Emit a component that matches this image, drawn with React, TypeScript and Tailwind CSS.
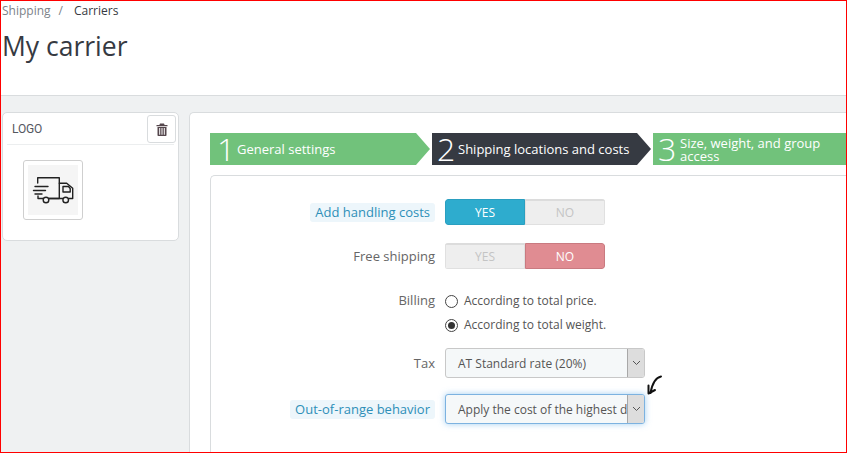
import React from "react";

function Truck() {
  return (
    <svg width="50" height="50" viewBox="0 0 50 50" fill="none" stroke="#222" strokeWidth="1.4" strokeLinecap="round" strokeLinejoin="round">
      <path d="M9.7 18V12.7H31.3V33.5H21" />
      <path d="M31.3 18.3H38.7L44.7 23.3V33.5H40.6" />
      <path d="M34.8 33.5H15" />
      <path d="M35 21.5H40.5L42.2 23.5V27H35Z" />
      <circle cx="18" cy="35" r="2.8" fill="#f5f5f5" />
      <circle cx="37.7" cy="35" r="2.8" fill="#f5f5f5" />
      <path d="M7 21.5H20M5.5 25.5H17.5M7 29H14M10 31V33.5H15" />
    </svg>
  );
}

function Trash() {
  return (
    <svg width="12" height="13" viewBox="0 0 12 13" fill="#54464c">
      <path d="M4 0.5H8L8.6 2H11.5V3.2H0.5V2H3.4Z" />
      <path fillRule="evenodd" d="M1.5 4H10.5V12.2A.8.8 0 0 1 9.7 13H2.3A.8.8 0 0 1 1.5 12.2ZM3.2 5V11.8H4.2V5ZM5.5 5V11.8H6.5V5ZM7.8 5V11.8H8.8V5Z" />
    </svg>
  );
}

function Chevron() {
  return (
    <svg width="9" height="6" viewBox="0 0 9 6" fill="none" stroke="#555" strokeWidth="1">
      <path d="M1 1L4.5 4.5L8 1" />
    </svg>
  );
}

function Label({ children, help }: { children: React.ReactNode; help?: boolean }) {
  return (
    <div className="w-[224px] shrink-0 flex justify-end items-center">
      <span
        className={
          help
            ? "bg-[#edf6fb] text-[#2d8fb8] rounded-[3px] px-[5px] h-[19px] flex items-center pt-[2px] text-[13px]"
            : "text-[#666] text-[13px] pt-[2px]"
        }
      >
        {children}
      </span>
    </div>
  );
}

function Toggle({ yes }: { yes: boolean }) {
  return (
    <div className="flex w-[160px] h-[26px] ml-[10px] text-[12px] rounded-[3px] overflow-hidden">
      <div
        className={
          yes
            ? "w-[80px] flex items-center justify-center pt-[1px] font-medium text-white bg-[#2eacce] border border-[#2a9fc0] rounded-l-[3px]"
            : "w-[80px] flex items-center justify-center pt-[1px] text-[#c4c4c4] bg-[#eeeeee] border border-[#e0e0e0] border-t-[2px] border-t-[#dcdcdc]"
        }
      >
        YES
      </div>
      <div
        className={
          yes
            ? "w-[80px] flex items-center justify-center pt-[1px] text-[#c4c4c4] bg-[#eeeeee] border border-[#e0e0e0] border-t-[2px] border-t-[#dcdcdc]"
            : "w-[80px] flex items-center justify-center pt-[1px] font-medium text-white bg-[#e08c92] border border-[#c97a80] rounded-r-[3px]"
        }
      >
        NO
      </div>
    </div>
  );
}

function Radio({ checked, children }: { checked?: boolean; children: React.ReactNode }) {
  return (
    <div className="h-[24px] flex items-center text-[12px] text-[#555]">
      <span className="w-[13px] h-[13px] rounded-full border border-[#444] bg-white flex items-center justify-center mr-[6px]">
        {checked && <span className="w-[7px] h-[7px] rounded-full bg-[#333]" />}
      </span>
      {children}
    </div>
  );
}

function Select({ children, focus }: { children: React.ReactNode; focus?: boolean }) {
  return (
    <div
      className={
        focus
          ? "w-[200px] h-[30px] ml-[10px] flex bg-[#f5f8f9] border border-[#7cb2e0] rounded-[3px] shadow-[0_0_6px_rgba(102,175,233,0.6)]"
          : "w-[200px] h-[30px] ml-[10px] flex bg-[#f5f8f9] border border-[#c8c8c8] rounded-[3px]"
      }
    >
      <div className="flex-1 min-w-0 pl-[12px] pt-[2px] flex items-center text-[12px] text-[#555] whitespace-nowrap overflow-hidden">
        {children}
      </div>
      <div className="w-[17px] shrink-0 bg-[#dddddd] border-l border-[#a8a8a8] flex items-center justify-center rounded-r-[2px]">
        <Chevron />
      </div>
    </div>
  );
}

function Step({ n, active, tall, children }: { n: string; active?: boolean; tall?: boolean; children: React.ReactNode }) {
  return (
    <div
      className={
        tall
          ? "h-[32px] flex-1 min-w-0 flex items-center text-white bg-[#71c27b] pl-[5px]"
          : active
            ? "h-[32px] w-[219px] shrink-0 flex items-center text-white bg-[#363a42] pl-[5px] [clip-path:polygon(0_0,205px_0,219px_50%,205px_100%,0_100%)]"
            : "h-[32px] w-[220px] shrink-0 flex items-center text-white bg-[#71c27b] pl-[7px] [clip-path:polygon(0_0,206px_0,220px_50%,206px_100%,0_100%)]"
      }
    >
      <span className={active || tall ? "text-[32px] font-light leading-none w-[21px] shrink-0" : "text-[32px] font-light leading-none w-[20px] shrink-0"}>{n}</span>
      <span className={tall ? "text-[13px] leading-[13px] pt-[2px] ml-[1px] w-[170px]" : "text-[13px] pt-[2px] whitespace-nowrap"}>{children}</span>
    </div>
  );
}

export default function App() {
  return (
    <div className="relative w-[847px] h-[453px] overflow-hidden bg-[#eff1f2] border border-[#ff0000] font-['Open_Sans',sans-serif]">
      <header className="h-[95px] bg-white border-b border-[#d9dcde] pl-[1px]">
        <div className="flex items-center h-[19px] text-[12px] pt-[1px]">
          <span className="text-[#7b8288]">Shipping</span>
          <span className="text-[#7b8288] ml-[8px]">/</span>
          <span className="text-[#363a42] ml-[11px]">Carriers</span>
        </div>
        <h1 className="text-[26.5px] leading-[36px] mt-[8px] text-[#363a42] font-normal">My carrier</h1>
      </header>

      <div className="flex items-start pt-[16px] pl-[1px] gap-[10px]">
        <section className="w-[177px] h-[129px] shrink-0 bg-white border border-[#d9dcde] rounded-[5px] px-[4px] pt-[2px]">
          <div className="flex items-center justify-between h-[30px] border-b border-[#eceeef] pb-[1px]">
            <span className="font-['Roboto',sans-serif] text-[#54585f] text-[12px] pl-[5px] tracking-[-0.2px]">LOGO</span>
            <button className="w-[29px] h-[28px] border border-[#d9dcde] rounded-[3px] bg-white flex items-center justify-center mr-[-2px]">
              <Trash />
            </button>
          </div>
          <div className="mt-[15px] ml-[16px] w-[60px] h-[60px] p-[4px] border border-[#cfcfcf] rounded-[3px] bg-white">
            <div className="bg-[#f5f5f5] w-[50px] h-[50px]">
              <Truck />
            </div>
          </div>
        </section>

        <section className="flex-1 min-w-0 h-[400px] bg-white border border-[#d9dcde] rounded-l-[5px] border-r-0 pl-[20px] pt-[20px]">
          <div className="flex gap-[2px]">
            <Step n="1">General settings</Step>
            <Step n="2" active>Shipping locations and costs</Step>
            <Step n="3" tall>Size, weight, and group access</Step>
          </div>
          <div className="mt-[10px] h-[300px] border border-[#d9dcde] border-r-0 rounded-tl-[5px] pt-[23px]">
            <div className="flex items-center h-[26px]">
              <Label help>Add handling costs</Label>
              <Toggle yes />
            </div>
            <div className="flex items-center h-[26px] mt-[18px]">
              <Label>Free shipping</Label>
              <Toggle yes={false} />
            </div>
            <div className="flex mt-[20px]">
              <div className="w-[224px] shrink-0 flex justify-end items-start h-[24px] pt-[2px] text-[13px] text-[#666]">Billing</div>
              <div className="ml-[10px]">
                <Radio>According to total price.</Radio>
                <Radio checked>According to total weight.</Radio>
              </div>
            </div>
            <div className="flex items-center h-[30px] mt-[11px]">
              <Label>Tax</Label>
              <Select>AT Standard rate (20%)</Select>
            </div>
            <div className="flex items-center h-[30px] mt-[16px]">
              <Label help>Out-of-range behavior</Label>
              <Select focus>Apply the cost of the highest defined range</Select>
            </div>
          </div>
        </section>
      </div>

      <svg className="absolute left-[644px] top-[373px]" width="20" height="24" viewBox="0 0 20 24" fill="none" stroke="#111" strokeWidth="2" strokeLinecap="round" strokeLinejoin="round">
        <path d="M16 2.5C11 3.5 7.5 8 5.5 19" />
        <path d="M3.5 11.5L3.5 19.5L10 16" />
      </svg>
    </div>
  );
}
